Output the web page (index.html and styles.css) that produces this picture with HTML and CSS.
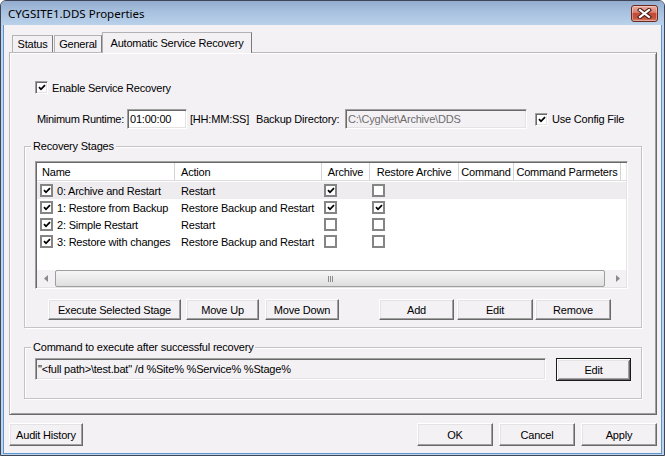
FILE: index.html
```html
<!DOCTYPE html>
<html>
<head>
<meta charset="utf-8">
<title>CYGSITE1.DDS Properties</title>
<link rel="stylesheet" href="styles.css">
</head>
<body>
<div class="window">
  <div class="titlebar">
    <span class="title">CYGSITE1.DDS Properties</span>
    <div class="close">
      <svg width="15" height="11" viewBox="0 0 15 11">
        <path d="M3 2 L12 9 M12 2 L3 9" stroke="#4a1d16" stroke-width="4.2" stroke-linecap="square" fill="none"/>
        <path d="M3 2 L12 9 M12 2 L3 9" stroke="#ffffff" stroke-width="2.2" stroke-linecap="square" fill="none"/>
      </svg>
    </div>
  </div>
  <div class="client">
    <div class="tabs">
      <div class="tab tab-status">Status</div>
      <div class="tab tab-general">General</div>
      <div class="tab tab-active">Automatic Service Recovery</div>
    </div>
    <div class="panel">
      <div class="check-row enable-row">
        <span class="cb cb-sunken"><svg width="8" height="7" viewBox="0 0 8 7"><path d="M1 3.2 L3 5.3 L7 1.2" stroke="#000" stroke-width="1.8" fill="none"/></svg></span>
        <span class="cb-label">Enable Service Recovery</span>
      </div>
      <div class="runtime-row">
        <span class="lbl lbl-runtime">Minimum Runtime:</span>
        <div class="edit edit-runtime">01:00:00</div>
        <span class="lbl lbl-format">[HH:MM:SS]</span>
        <span class="lbl lbl-backup">Backup Directory:</span>
        <div class="edit edit-backup disabled">C:\CygNet\Archive\DDS</div>
        <span class="cb cb-sunken cb-config"><svg width="8" height="7" viewBox="0 0 8 7"><path d="M1 3.2 L3 5.3 L7 1.2" stroke="#000" stroke-width="1.8" fill="none"/></svg></span>
        <span class="cb-label">Use Config File</span>
      </div>
      <div class="group group-stages">
        <span class="group-title">Recovery Stages</span>
        <div class="listview">
          <div class="lv-header">
            <div class="hd hd-left">Name</div>
            <div class="hd hd-left hd-action">Action</div>
            <div class="hd">Archive</div>
            <div class="hd">Restore Archive</div>
            <div class="hd">Command</div>
            <div class="hd">Command Parmeters</div>
          </div>
          <div class="lv-body">
            <div class="lv-row selected">
              <div class="cell cell-name"><span class="cb cb-flat"><svg width="8" height="7" viewBox="0 0 8 7"><path d="M1 3.2 L3 5.3 L7 1.2" stroke="#000" stroke-width="1.8" fill="none"/></svg></span>0: Archive and Restart</div>
              <div class="cell cell-text">Restart</div>
              <div class="cell cell-cb"><span class="cb cb-flat"><svg width="8" height="7" viewBox="0 0 8 7"><path d="M1 3.2 L3 5.3 L7 1.2" stroke="#000" stroke-width="1.8" fill="none"/></svg></span></div>
              <div class="cell cell-cb"><span class="cb cb-flat"></span></div>
              <div class="cell"></div>
              <div class="cell"></div>
            </div>
            <div class="lv-row">
              <div class="cell cell-name"><span class="cb cb-flat"><svg width="8" height="7" viewBox="0 0 8 7"><path d="M1 3.2 L3 5.3 L7 1.2" stroke="#000" stroke-width="1.8" fill="none"/></svg></span>1: Restore from Backup</div>
              <div class="cell cell-text">Restore Backup and Restart</div>
              <div class="cell cell-cb"><span class="cb cb-flat"><svg width="8" height="7" viewBox="0 0 8 7"><path d="M1 3.2 L3 5.3 L7 1.2" stroke="#000" stroke-width="1.8" fill="none"/></svg></span></div>
              <div class="cell cell-cb"><span class="cb cb-flat"><svg width="8" height="7" viewBox="0 0 8 7"><path d="M1 3.2 L3 5.3 L7 1.2" stroke="#000" stroke-width="1.8" fill="none"/></svg></span></div>
              <div class="cell"></div>
              <div class="cell"></div>
            </div>
            <div class="lv-row">
              <div class="cell cell-name"><span class="cb cb-flat"><svg width="8" height="7" viewBox="0 0 8 7"><path d="M1 3.2 L3 5.3 L7 1.2" stroke="#000" stroke-width="1.8" fill="none"/></svg></span>2: Simple Restart</div>
              <div class="cell cell-text">Restart</div>
              <div class="cell cell-cb"><span class="cb cb-flat"></span></div>
              <div class="cell cell-cb"><span class="cb cb-flat"></span></div>
              <div class="cell"></div>
              <div class="cell"></div>
            </div>
            <div class="lv-row">
              <div class="cell cell-name"><span class="cb cb-flat"><svg width="8" height="7" viewBox="0 0 8 7"><path d="M1 3.2 L3 5.3 L7 1.2" stroke="#000" stroke-width="1.8" fill="none"/></svg></span>3: Restore with changes</div>
              <div class="cell cell-text">Restore Backup and Restart</div>
              <div class="cell cell-cb"><span class="cb cb-flat"></span></div>
              <div class="cell cell-cb"><span class="cb cb-flat"></span></div>
              <div class="cell"></div>
              <div class="cell"></div>
            </div>
          </div>
          <div class="hscroll">
            <div class="sb-arrow"><svg width="4" height="7" viewBox="0 0 4 7"><polygon points="4,0 0,3.5 4,7" fill="#8a8a8a"/></svg></div>
            <div class="sb-track">
              <div class="sb-thumb"><span class="grip"></span><span class="grip"></span><span class="grip"></span></div>
            </div>
            <div class="sb-arrow"><svg width="4" height="7" viewBox="0 0 4 7"><polygon points="0,0 4,3.5 0,7" fill="#8a8a8a"/></svg></div>
          </div>
        </div>
        <div class="btn-row">
          <div class="btn btn-exec">Execute Selected Stage</div>
          <div class="btn btn-up">Move Up</div>
          <div class="btn btn-down">Move Down</div>
          <div class="btn btn-add">Add</div>
          <div class="btn btn-edit">Edit</div>
          <div class="btn btn-remove">Remove</div>
        </div>
      </div>
      <div class="group group-command">
        <span class="group-title">Command to execute after successful recovery</span>
        <div class="command-row">
          <div class="edit edit-command readonly">"&lt;full path&gt;\test.bat" /d %Site% %Service% %Stage%</div>
          <div class="btn btn-default">Edit</div>
        </div>
      </div>
    </div>
    <div class="footer">
      <div class="btn btn-audit">Audit History</div>
      <div class="footer-right">
        <div class="btn btn-foot">OK</div>
        <div class="btn btn-foot">Cancel</div>
        <div class="btn btn-foot">Apply</div>
      </div>
    </div>
  </div>
</div>
</body>
</html>
```

FILE: styles.css
```css
html, body {
  margin: 0;
  padding: 0;
  background: #ffffff;
}
body {
  font-family: "Liberation Sans", Arial, sans-serif;
  font-size: 11px;
  letter-spacing: -0.2px;
  color: #000;
}
.window {
  width: 665px;
  height: 456px;
  box-sizing: border-box;
  border: 1px solid #3c4656;
  border-radius: 6px 6px 0 0;
  background: #bfd4ec;
  display: flex;
  flex-direction: column;
  overflow: hidden;
}
.titlebar {
  height: 24px;
  flex: none;
  display: flex;
  align-items: center;
  justify-content: space-between;
  padding: 0 6px 0 7px;
  background: linear-gradient(180deg, #93acce 0%, #a8c1df 45%, #b9d1ea 100%);
}
.title {
  font-family: "Noto Sans", "Open Sans", sans-serif;
  font-size: 11.5px;
  letter-spacing: 0;
  color: #000;
  padding-top: 1px;
}
.close {
  width: 27px;
  height: 17px;
  box-sizing: border-box;
  border: 1px solid #6a2a20;
  border-radius: 3px;
  background: linear-gradient(180deg, #e9ab9f 0%, #d98473 42%, #c34a35 50%, #c5533b 80%, #d9806a 100%);
  box-shadow: inset 0 0 0 1px rgba(255, 255, 255, 0.35);
  display: flex;
  align-items: center;
  justify-content: center;
  margin-top: 1px;
}
.client {
  flex: 1;
  margin: 0 2px 1px 2px;
  border: 1px solid #5b96cf;
  border-top: none;
  background: #f4f1f5;
  display: flex;
  flex-direction: column;
  padding: 7px 4px 7px 5px;
  min-height: 0;
}
.tabs {
  height: 20px;
  flex: none;
  display: flex;
  align-items: flex-end;
}
.tab {
  box-sizing: border-box;
  height: 17px;
  display: flex;
  align-items: center;
  justify-content: center;
  border-top: 1px solid #b3b3b3;
  border-left: 1px solid #b3b3b3;
  border-right: 1px solid #7a7a7a;
  background: #f4f1f5;
  white-space: nowrap;
}
.tab-status {
  width: 41px;
  margin-left: 3px;
}
.tab-general {
  width: 48px;
  margin-left: 1px;
}
.tab-active {
  width: 150px;
  height: 21px;
  margin-bottom: -1px;
  position: relative;
  z-index: 1;
  padding-bottom: 1px;
}
.panel {
  flex: 1;
  box-sizing: border-box;
  border: 1px solid;
  border-color: #b8b8b8 #696969 #696969 #b8b8b8;
  box-shadow: inset 1px 1px #ffffff, inset -1px -1px #a0a0a0;
  display: flex;
  flex-direction: column;
  padding-left: 14px;
  min-height: 0;
}
.check-row {
  display: flex;
  align-items: center;
  height: 13px;
}
.enable-row {
  margin-top: 28px;
  margin-left: 11px;
}
.cb {
  box-sizing: border-box;
  width: 13px;
  height: 13px;
  flex: none;
  display: inline-flex;
  align-items: center;
  justify-content: center;
  background: #ffffff;
}
.cb-sunken {
  border: 1px solid;
  border-color: #a0a0a0 #ffffff #ffffff #a0a0a0;
  box-shadow: inset 1px 1px #696969, inset -1px -1px #e3e3e3;
}
.cb-flat {
  border: 2px solid #858585;
}
.cb-label {
  margin-left: 4px;
  white-space: nowrap;
}
.runtime-row {
  display: flex;
  align-items: center;
  height: 20px;
  margin-top: 15px;
  margin-left: 13px;
  white-space: nowrap;
}
.lbl-runtime {
  width: 90px;
  letter-spacing: -0.3px;
}
.lbl-format {
  width: 66px;
  margin-left: 3px;
}
.lbl-backup {
  width: 89px;
}
.edit {
  box-sizing: border-box;
  border: 1px solid;
  border-color: #a0a0a0 #ffffff #ffffff #a0a0a0;
  box-shadow: inset 1px 1px #696969, inset -1px -1px #e3e3e3;
  background: #ffffff;
  display: flex;
  align-items: center;
  padding-left: 2px;
  white-space: nowrap;
  overflow: hidden;
}
.edit-runtime {
  width: 60px;
  height: 20px;
}
.edit-backup {
  width: 182px;
  height: 20px;
}
.disabled {
  background: #f4f1f5;
  color: #6d6d6d;
}
.readonly {
  background: #f4f1f5;
}
.cb-config {
  margin-left: 8px;
}
.group {
  box-sizing: border-box;
  width: 618px;
  border: 1px solid #c6c2c6;
  box-shadow: 1px 1px #ffffff, inset 1px 1px #ffffff;
  display: flex;
  flex-direction: column;
  align-items: flex-start;
  padding-left: 10px;
}
.group-title {
  margin-top: -7px;
  margin-left: -4px;
  padding: 0 2px;
  line-height: 13px;
  height: 13px;
  background: #f4f1f5;
  white-space: nowrap;
}
.group-stages {
  margin-top: 17px;
  padding-bottom: 7px;
}
.listview {
  box-sizing: border-box;
  width: 593px;
  height: 128px;
  margin-top: 8px;
  border: 1px solid;
  border-color: #a0a0a0 #ffffff #ffffff #a0a0a0;
  box-shadow: inset 1px 1px #696969, inset -1px -1px #e3e3e3;
  padding: 1px;
  background: #ffffff;
  display: flex;
  flex-direction: column;
}
.lv-header {
  height: 18px;
  flex: none;
  display: grid;
  grid-template-columns: 138px 147px 48px 89px 55px 107px;
  border-bottom: 1px solid #dcdcdc;
  box-sizing: border-box;
  background: #ffffff;
}
.hd {
  border-right: 1px solid #d6d3d6;
  display: flex;
  align-items: center;
  justify-content: center;
  white-space: nowrap;
  overflow: hidden;
}
.hd-left {
  justify-content: flex-start;
  padding-left: 5px;
}
.hd-action {
  padding-left: 6px;
}
.lv-body {
  flex: 1;
  min-height: 0;
  display: flex;
  flex-direction: column;
  padding-top: 1px;
}
.lv-row {
  height: 17px;
  flex: none;
  display: grid;
  grid-template-columns: 138px 147px 48px 89px 55px 107px;
}
.lv-row.selected {
  background: #efecf0;
}
.cell {
  display: flex;
  align-items: center;
  white-space: nowrap;
  overflow: hidden;
}
.cell-name {
  padding-left: 3px;
}
.cell-name .cb {
  margin-right: 4px;
}
.cell-text {
  padding-left: 6px;
}
.cell-cb {
  padding-left: 2px;
}
.hscroll {
  height: 17px;
  flex: none;
  display: flex;
  background: #f3f1f4;
}
.sb-arrow {
  width: 17px;
  flex: none;
  display: flex;
  align-items: center;
  justify-content: center;
}
.sb-track {
  flex: 1;
  display: flex;
  padding: 0 4px 0 1px;
}
.sb-thumb {
  flex: 1;
  box-sizing: border-box;
  border: 1px solid #9e9e9e;
  border-radius: 2px;
  background: linear-gradient(180deg, #f6f6f6 0%, #ebebeb 50%, #dedede 100%);
  display: flex;
  align-items: center;
  justify-content: center;
  gap: 1px;
}
.grip {
  width: 1px;
  height: 6px;
  background: #8c8c8c;
}
.btn {
  box-sizing: border-box;
  border: 1px solid;
  border-color: #ffffff #696969 #696969 #ffffff;
  box-shadow: inset -1px -1px #a0a0a0, inset 1px 1px #e3e3e3;
  background: #f4f1f5;
  display: flex;
  align-items: center;
  justify-content: center;
  white-space: nowrap;
  flex: none;
}
.btn-row {
  display: flex;
  margin-top: 10px;
  margin-left: 13px;
  height: 21px;
}
.btn-row .btn {
  height: 21px;
}
.btn-exec { width: 133px; }
.btn-up { width: 73px; margin-left: 5px; }
.btn-down { width: 74px; margin-left: 6px; }
.btn-add { width: 75px; margin-left: 40px; }
.btn-edit { width: 76px; margin-left: 3px; }
.btn-remove { width: 76px; margin-left: 2px; }
.group-command {
  margin-top: 19px;
  padding-bottom: 17px;
}
.command-row {
  display: flex;
  margin-top: 4px;
}
.edit-command {
  width: 511px;
  height: 22px;
}
.btn-default {
  width: 75px;
  height: 23px;
  margin-left: 10px;
  border: 1px solid #1a1a1a;
  box-shadow: inset 1px 1px #ffffff, inset -1px -1px #696969, inset 2px 2px #e3e3e3, inset -2px -2px #a0a0a0;
}
.footer {
  flex: none;
  display: flex;
  justify-content: space-between;
  margin-top: 8px;
  height: 23px;
}
.btn-audit {
  width: 74px;
  height: 23px;
}
.footer-right {
  display: flex;
  gap: 6px;
}
.btn-foot {
  width: 76px;
  height: 23px;
}
```
